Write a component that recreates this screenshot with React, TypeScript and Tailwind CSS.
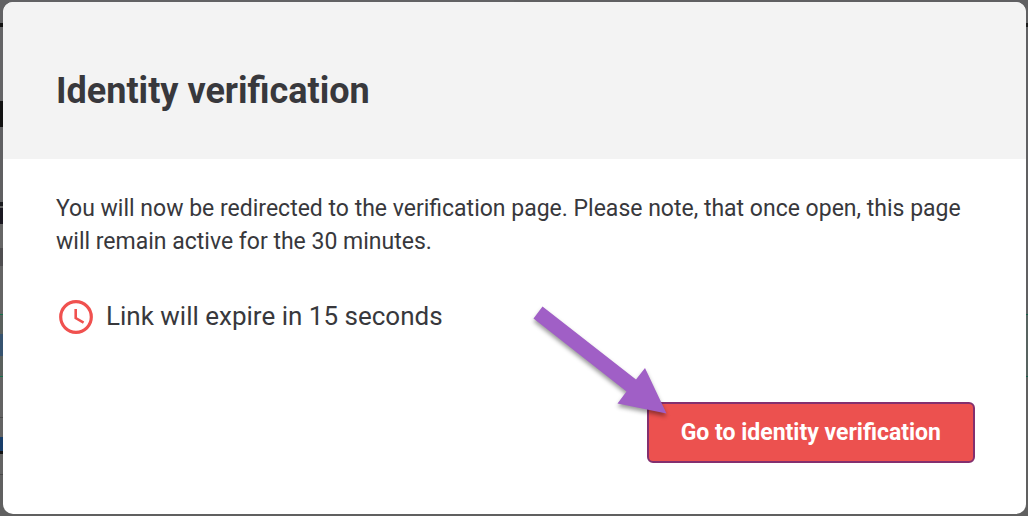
import React from 'react';

interface Strip {
  height: string;
  left: string;
  right: string;
}

// Dimmed page behind the dialog, only its edges stay visible
const strips: Strip[] = [
  { height: 'h-[23px]', left: 'bg-[#626264]', right: 'bg-[#606062]' },
  { height: 'h-1', left: 'bg-[#121212]', right: 'bg-[#1c1c1c]' },
  { height: 'h-[74px]', left: 'bg-[#646466]', right: 'bg-[#606062]' },
  { height: 'h-[26px]', left: 'bg-[#121212]', right: 'bg-[#606062]' },
  { height: 'h-[75px]', left: 'bg-[#606062]', right: 'bg-[#606062]' },
  { height: 'h-1', left: 'bg-[#1a1a1e]', right: 'bg-[#606062]' },
  { height: 'h-0.5', left: 'bg-[#606060]', right: 'bg-[#606062]' },
  { height: 'h-4', left: 'bg-[#1b1821]', right: 'bg-[#606062]' },
  { height: 'h-6', left: 'bg-[#666666]', right: 'bg-[#606062]' },
  { height: 'h-[18px]', left: 'bg-[#4f4e50]', right: 'bg-[#606062]' },
  { height: 'h-12', left: 'bg-[#646464]', right: 'bg-[#606062]' },
  { height: 'h-px', left: 'bg-[#15724c]', right: 'bg-[#155f48]' },
  { height: 'h-[19px]', left: 'bg-[#5a605d]', right: 'bg-[#586360]' },
  { height: 'h-[22px]', left: 'bg-[#36536f]', right: 'bg-[#586360]' },
  { height: 'h-5', left: 'bg-[#5a605d]', right: 'bg-[#586360]' },
  { height: 'h-px', left: 'bg-[#15724c]', right: 'bg-[#155f48]' },
  { height: 'h-10', left: 'bg-[#636363]', right: 'bg-[#606060]' },
  { height: 'h-px', left: 'bg-[#4a4a4a]', right: 'bg-[#606060]' },
  { height: 'h-[19px]', left: 'bg-[#636363]', right: 'bg-[#606060]' },
  { height: 'h-3.5', left: 'bg-[#183e6a]', right: 'bg-[#606060]' },
  { height: 'h-[3px]', left: 'bg-[#141414]', right: 'bg-[#606060]' },
  { height: 'h-5', left: 'bg-[#636363]', right: 'bg-[#606060]' },
  { height: 'h-px', left: 'bg-[#4a4a4a]', right: 'bg-[#606060]' },
];

const Backdrop: React.FC = () => (
  <div className="absolute inset-0 -z-10 flex flex-col overflow-hidden bg-[#606060]" aria-hidden="true">
    {strips.map((strip, index) => (
      <div key={index} className={`flex shrink-0 ${strip.height}`}>
        <div className={`flex-1 ${strip.left}`} />
        <div className={`flex-1 ${strip.right}`} />
      </div>
    ))}
  </div>
);

const ClockIcon: React.FC = () => (
  <svg className="size-10 shrink-0" viewBox="0 0 40 40" fill="none" stroke="#f0514f" aria-hidden="true">
    <circle cx="20" cy="20" r="15.3" strokeWidth="3.2" />
    <path d="M19.7 12V21L27.6 25.6" strokeWidth="2.6" />
  </svg>
);

const Arrow: React.FC = () => (
  <svg
    className="pointer-events-none absolute -top-24 right-[300px] h-[120px] w-[145px] overflow-visible drop-shadow-[0_3px_2px_rgba(0,0,0,0.4)]"
    viewBox="0 0 145 120"
    aria-hidden="true"
  >
    <path d="M12.5 0.5L106 73.5L115 62L136.5 107.5L87.5 97.5L96.5 85.5L3.5 12.5Z" fill="#a05fc6" />
  </svg>
);

const App: React.FC = () => {
  return (
    <div className="relative isolate flex min-h-screen flex-col py-0.5 pr-0.5 pl-[3px] font-[Roboto,sans-serif] text-[#38383c]">
      <Backdrop />
      <section
        role="dialog"
        aria-labelledby="dialog-title"
        className="flex flex-1 flex-col overflow-hidden rounded-[10px] bg-white"
      >
        <header className="bg-[#f3f3f3] px-[53px] pt-[65px] pb-11">
          <h1 id="dialog-title" className="text-[36px] leading-[48px] font-bold">
            Identity verification
          </h1>
        </header>

        <div className="flex flex-1 flex-col pt-[33px] pr-[51px] pb-[51px] pl-[53px]">
          <p className="text-[23px] leading-[33px]">
            You will now be redirected to the verification page. Please note, that once open, this page
            will remain active for the 30 minutes.
          </p>

          <div className="mt-[39px] flex items-start gap-2.5">
            <ClockIcon />
            <p className="text-[26px] leading-[38px]">Link will expire in 15 seconds</p>
          </div>

          <div className="relative mt-auto flex justify-end">
            <button
              type="button"
              className="h-[61px] rounded-md border-2 border-[#842f6e] bg-[#ec514f] px-8 pt-0.5 text-[23px] font-bold text-white"
            >
              Go to identity verification
            </button>
            <Arrow />
          </div>
        </div>
      </section>
    </div>
  );
};

export default App;
